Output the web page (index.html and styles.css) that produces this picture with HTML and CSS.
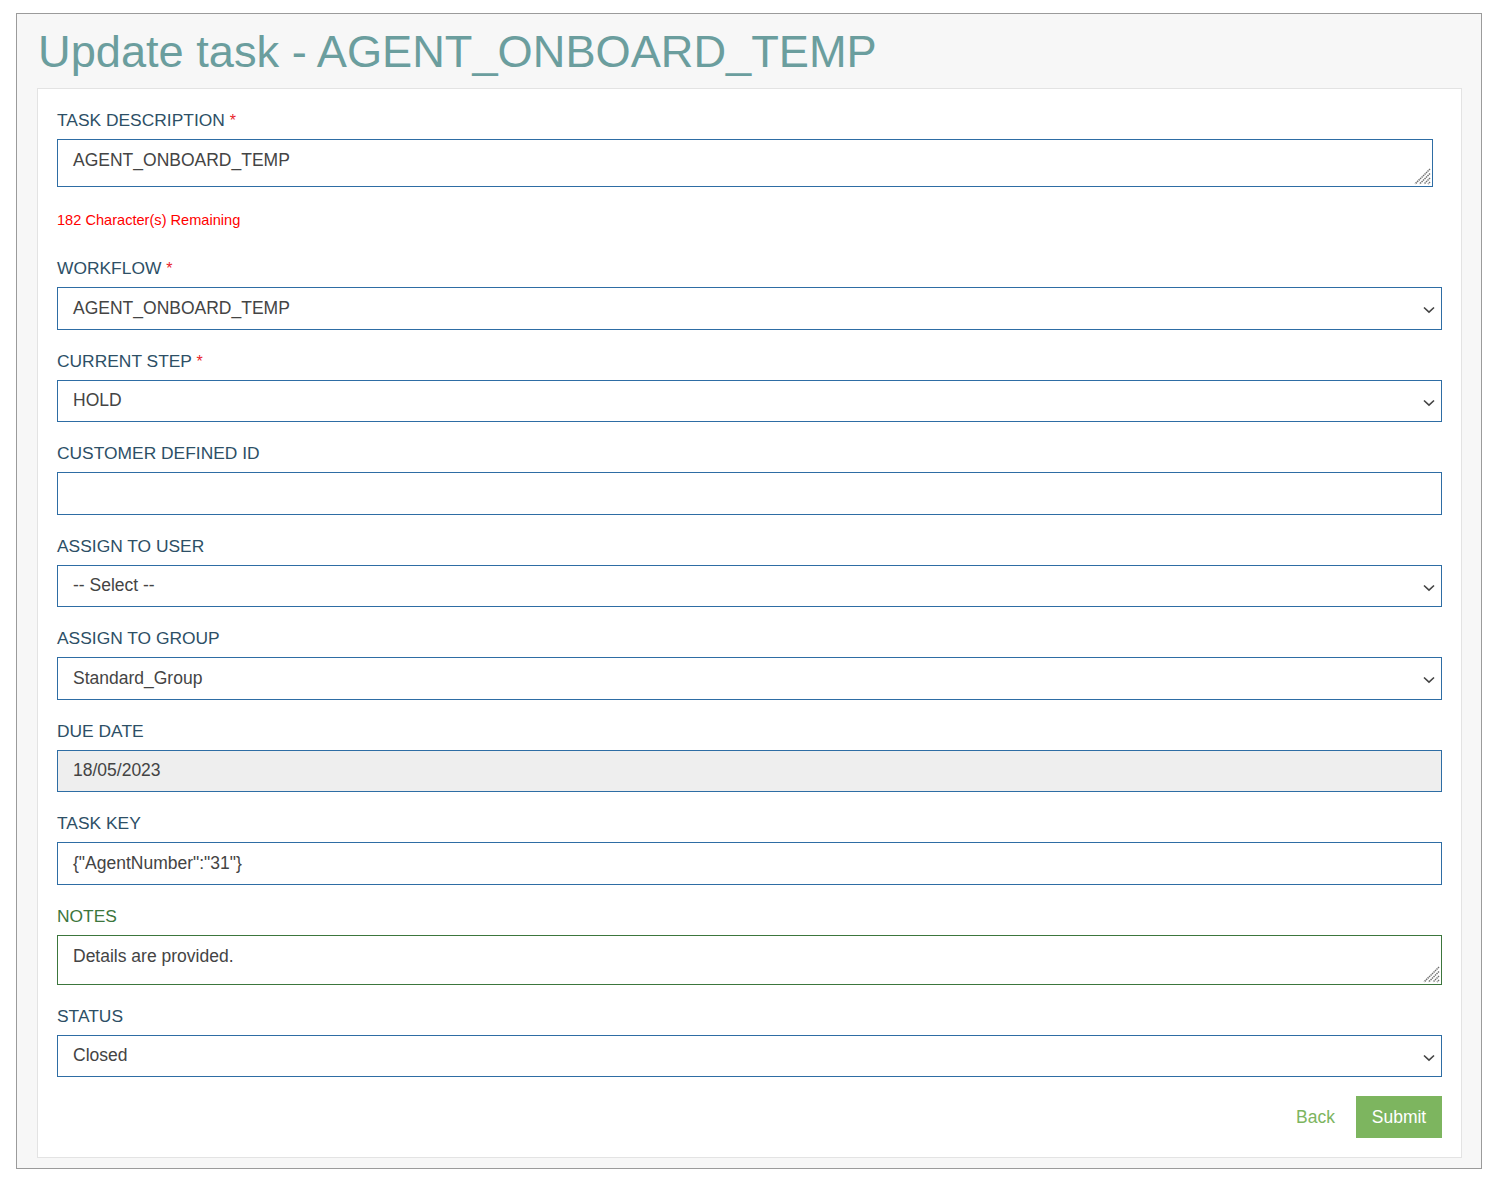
FILE: index.html
```html
<!DOCTYPE html>
<html>
<head>
<meta charset="utf-8">
<link rel="stylesheet" href="styles.css">
</head>
<body>
<div class="page">
  <h1 class="title">Update task - AGENT_ONBOARD_TEMP</h1>
  <div class="panel">
    <div class="group first">
      <label class="lbl">TASK DESCRIPTION <span class="req">*</span></label>
      <div class="ta-wrap ta-desc">
        <textarea class="ctl ta">AGENT_ONBOARD_TEMP</textarea>
        <svg class="grip" viewBox="0 0 18 18"><path d="M17 2 L2 17 M17 6.5 L6.5 17 M17 11 L11 17 M17 15 L15 17" stroke="#6f6f6f" stroke-width="1.5" stroke-dasharray="1.4 0.7" fill="none"/></svg>
      </div>
      <div class="counter">182 Character(s) Remaining</div>
    </div>
    <div class="group">
      <label class="lbl">WORKFLOW <span class="req">*</span></label>
      <div class="sel ctl">AGENT_ONBOARD_TEMP<svg class="chev" viewBox="0 0 12 8"><path d="M1 1.5 L6 6.2 L11 1.5" fill="none" stroke="#444" stroke-width="1.6"/></svg></div>
    </div>
    <div class="group">
      <label class="lbl">CURRENT STEP <span class="req">*</span></label>
      <div class="sel ctl">HOLD<svg class="chev" viewBox="0 0 12 8"><path d="M1 1.5 L6 6.2 L11 1.5" fill="none" stroke="#444" stroke-width="1.6"/></svg></div>
    </div>
    <div class="group">
      <label class="lbl">CUSTOMER DEFINED ID</label>
      <div class="ctl inp"></div>
    </div>
    <div class="group">
      <label class="lbl">ASSIGN TO USER</label>
      <div class="sel ctl">-- Select --<svg class="chev" viewBox="0 0 12 8"><path d="M1 1.5 L6 6.2 L11 1.5" fill="none" stroke="#444" stroke-width="1.6"/></svg></div>
    </div>
    <div class="group">
      <label class="lbl">ASSIGN TO GROUP</label>
      <div class="sel ctl">Standard_Group<svg class="chev" viewBox="0 0 12 8"><path d="M1 1.5 L6 6.2 L11 1.5" fill="none" stroke="#444" stroke-width="1.6"/></svg></div>
    </div>
    <div class="group">
      <label class="lbl">DUE DATE</label>
      <div class="ctl inp disabled">18/05/2023</div>
    </div>
    <div class="group">
      <label class="lbl">TASK KEY</label>
      <div class="ctl inp">{"AgentNumber":"31"}</div>
    </div>
    <div class="group">
      <label class="lbl lbl-ok">NOTES</label>
      <div class="ta-wrap ta-notes">
        <textarea class="ctl ta ok">Details are provided.</textarea>
        <svg class="grip" viewBox="0 0 18 18"><path d="M17 2 L2 17 M17 6.5 L6.5 17 M17 11 L11 17 M17 15 L15 17" stroke="#6f6f6f" stroke-width="1.5" stroke-dasharray="1.4 0.7" fill="none"/></svg>
      </div>
    </div>
    <div class="group">
      <label class="lbl">STATUS</label>
      <div class="sel ctl">Closed<svg class="chev" viewBox="0 0 12 8"><path d="M1 1.5 L6 6.2 L11 1.5" fill="none" stroke="#444" stroke-width="1.6"/></svg></div>
    </div>
    <div class="actions">
      <a class="back">Back</a>
      <button class="submit">Submit</button>
    </div>
  </div>
</div>
</body>
</html>
```
FILE: styles.css
```css
html, body {
  margin: 0;
  padding: 0;
  background: #fff;
}
body {
  font-family: "Liberation Sans", Arial, sans-serif;
}
.page {
  margin: 13px 13px 17px 16px;
  border: 1px solid #9b9b9b;
  background: #f7f7f7;
  padding: 0 19px 10px 20px;
}
.title {
  margin: 0;
  padding: 12px 0 10px 1px;
  font-weight: normal;
  font-size: 45.2px;
  line-height: 52px;
  color: #6b9e9e;
}
.panel {
  background: #fff;
  border: 1px solid #e3e3e3;
  padding: 19px 19px 19px 19px;
}
.group {
  display: flex;
  flex-direction: column;
  margin-bottom: 19px;
}
.lbl {
  font-size: 17.4px;
  line-height: 25px;
  margin-bottom: 6px;
  color: #2d4f66;
}
.lbl-ok {
  color: #3c763d;
}
.req {
  color: #e8242b;
  font-size: 16px;
}
.ctl {
  box-sizing: border-box;
  border: 1px solid #2e6da4;
  font-family: "Liberation Sans", Arial, sans-serif;
  font-size: 17.5px;
  color: #444;
  background: #fff;
  width: 100%;
}
.inp, .sel {
  height: 42.5px;
  padding: 0 15px;
  display: flex;
  align-items: center;
}
.sel {
  position: relative;
}
.chev {
  position: absolute;
  right: 6px;
  top: 18px;
  width: 12px;
  height: 8px;
}
.disabled {
  background: #eeeeee;
}
.ta-wrap {
  position: relative;
}
.ta {
  display: block;
  padding: 9px 15px;
  line-height: 22px;
  resize: none;
  margin: 0;
  height: 100%;
}
.ta.ok {
  border-color: #3c763d;
}
.ta-desc {
  width: 1376px;
  height: 48px;
}
.ta-notes {
  height: 50px;
}
.grip {
  position: absolute;
  right: 2px;
  bottom: 2px;
  width: 18px;
  height: 18px;
}
.counter {
  color: #f00;
  font-size: 14.6px;
  line-height: 20px;
  margin-top: 23px;
  margin-bottom: 26px;
}
.group.first {
  margin-bottom: 0;
}
.actions {
  display: flex;
  justify-content: flex-end;
  align-items: center;
  gap: 21px;
  margin-top: 0;
}
.back {
  color: #7db55f;
  font-size: 17.5px;
}
.submit {
  background: #7db55f;
  border: none;
  color: #fff;
  font-family: "Liberation Sans", Arial, sans-serif;
  font-size: 17.5px;
  height: 42px;
  width: 86px;
  padding: 0;
}
```
